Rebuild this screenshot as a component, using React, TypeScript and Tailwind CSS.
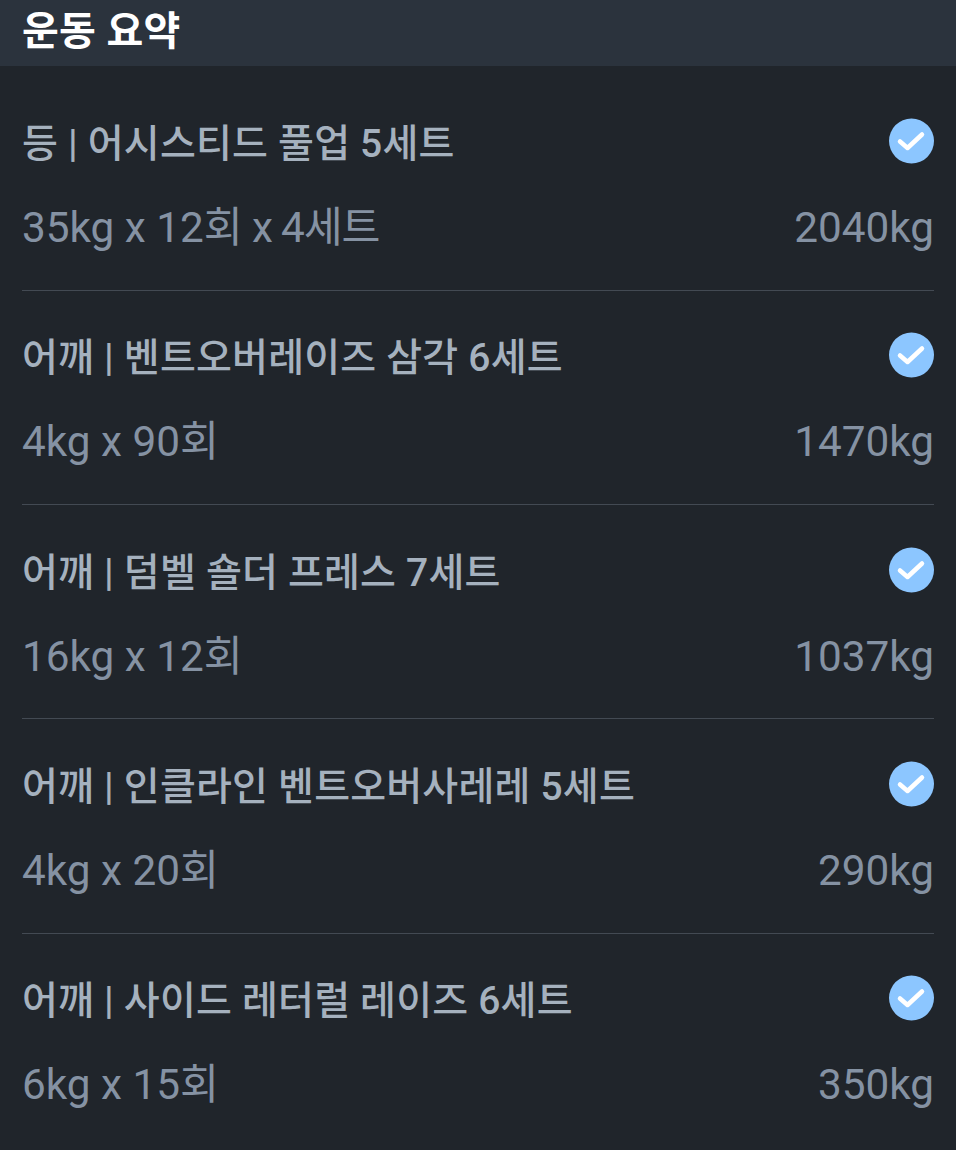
import React from 'react';

const workouts = [
  { title: '등 | 어시스티드 풀업 5세트', detail: '35kg x 12회', sets: ' x 4세트', total: '2040kg' },
  { title: '어깨 | 벤트오버레이즈 삼각 6세트', detail: '4kg x 90회', total: '1470kg' },
  { title: '어깨 | 덤벨 숄더 프레스 7세트', detail: '16kg x 12회', total: '1037kg' },
  { title: '어깨 | 인클라인 벤트오버사레레 5세트', detail: '4kg x 20회', total: '290kg' },
  { title: '어깨 | 사이드 레터럴 레이즈 6세트', detail: '6kg x 15회', total: '350kg' },
];

const font = "font-['Roboto','Noto_Sans_CJK_KR',sans-serif]";

const CheckBadge: React.FC = () => (
  <svg width="45" height="46" viewBox="0 0 45 46" className="shrink-0">
    <ellipse cx="22.5" cy="23" rx="22.5" ry="22.5" fill="#8cc6ff" />
    <path d="M11 23.5l7.5 6.5L33 16.5" fill="none" stroke="#fff" strokeWidth="4.5" strokeLinecap="round" strokeLinejoin="round" />
  </svg>
);

export default function App() {
  return (
    <div className={`w-[956px] h-[1150px] overflow-hidden bg-[#20252b] ${font}`}>
      {/* Header */}
      <div className="h-[66px] bg-[#2b333d] px-[22px] pt-[7px]">
        <h1 className="text-[40px] leading-[50px] font-bold text-white tracking-[0.3px]">운동 요약</h1>
      </div>

      {/* Workout List */}
      <div className="px-[22px] pt-[10.5px]">
        {workouts.map((item, i) => (
          <div key={item.title} className={`h-[214.3px] pt-[41.6px] ${i < workouts.length - 1 ? 'border-b border-[#434a53]' : ''}`}>
            <div className="flex items-center justify-between h-[46px]">
              <span className="pt-[6px] text-[39px] leading-[46px] font-medium tracking-[0.2px] text-[#a5b1be]">{item.title}</span>
              <CheckBadge />
            </div>
            <div className="flex items-center justify-between mt-[36px] text-[42.3px] leading-[56px] text-[#8592a3]">
              <span className="whitespace-pre">
                {item.detail}
                {item.sets && <span className="tracking-[-1.2px]">{item.sets}</span>}
              </span>
              <span>{item.total}</span>
            </div>
          </div>
        ))}
      </div>
    </div>
  );
}
